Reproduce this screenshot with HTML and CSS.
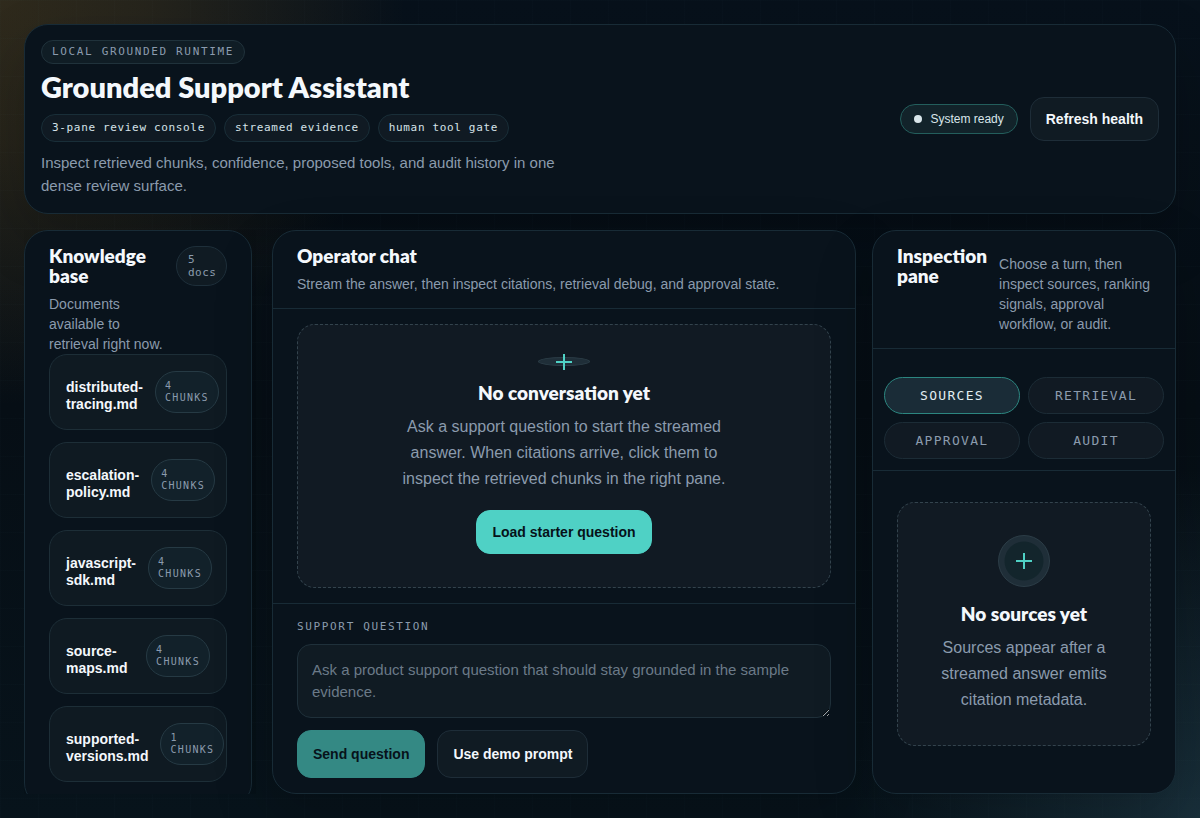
FILE: index.html
```html
<!DOCTYPE html>
<html lang="en">
<head>
  <meta charset="UTF-8">
  <meta name="viewport" content="width=device-width, initial-scale=1.0">
  <title>Grounded Support Assistant</title>
  <link rel="stylesheet" href="styles.css">
</head>
<body>
  <div class="app">

    <header class="hero">
      <div class="hero-copy">
        <span class="eyebrow">Local grounded runtime</span>
        <h1>Grounded Support Assistant</h1>
        <div class="chips">
          <span class="chip">3-pane review console</span>
          <span class="chip">streamed evidence</span>
          <span class="chip">human tool gate</span>
        </div>
        <p class="hero-text">Inspect retrieved chunks, confidence, proposed tools, and audit history in one dense review surface.</p>
      </div>
      <div class="hero-actions">
        <span class="status"><span class="status-dot"></span>System ready</span>
        <button class="btn" type="button">Refresh health</button>
      </div>
    </header>

    <main class="workspace">

      <div class="sidebar">
        <section class="panel docs">
          <div class="docs-head">
            <div>
              <h2>Knowledge base</h2>
              <p class="sub">Documents available to retrieval right now.</p>
            </div>
            <span class="docs-count">5 docs</span>
          </div>
          <ul class="doc-list">
            <li class="doc"><strong class="doc-name">distributed-tracing.md</strong><span class="doc-chunks">4 chunks</span></li>
            <li class="doc"><strong class="doc-name">escalation-policy.md</strong><span class="doc-chunks">4 chunks</span></li>
            <li class="doc"><strong class="doc-name">javascript-sdk.md</strong><span class="doc-chunks">4 chunks</span></li>
            <li class="doc"><strong class="doc-name">source-maps.md</strong><span class="doc-chunks">4 chunks</span></li>
            <li class="doc"><strong class="doc-name">supported-versions.md</strong><span class="doc-chunks">1 chunks</span></li>
          </ul>
        </section>
      </div>

      <section class="panel chat">
        <div class="panel-head">
          <h2>Operator chat</h2>
          <p class="sub">Stream the answer, then inspect citations, retrieval debug, and approval state.</p>
        </div>
        <div class="chat-body">
          <div class="empty">
            <div class="empty-icon flat">
              <svg width="16" height="16" viewBox="0 0 16 16"><path d="M8 0v16M0 8h16" stroke="currentColor" stroke-width="2"/></svg>
            </div>
            <h3>No conversation yet</h3>
            <p>Ask a support question to start the streamed answer. When citations arrive, click them to inspect the retrieved chunks in the right pane.</p>
            <button class="btn btn-primary" type="button">Load starter question</button>
          </div>
        </div>
        <form class="composer">
          <label for="question">Support question</label>
          <textarea id="question" rows="2" placeholder="Ask a product support question that should stay grounded in the sample evidence."></textarea>
          <div class="composer-actions">
            <button class="btn btn-primary" type="submit" disabled>Send question</button>
            <button class="btn" type="button">Use demo prompt</button>
          </div>
        </form>
      </section>

      <section class="panel inspect">
        <div class="panel-head inspect-head">
          <h2>Inspection pane</h2>
          <p class="sub">Choose a turn, then inspect sources, ranking signals, approval workflow, or audit.</p>
        </div>
        <div class="tabs">
          <button class="tab active" type="button">Sources</button>
          <button class="tab" type="button">Retrieval</button>
          <button class="tab" type="button">Approval</button>
          <button class="tab" type="button">Audit</button>
        </div>
        <div class="inspect-body">
          <div class="empty">
            <div class="empty-icon">
              <svg width="16" height="16" viewBox="0 0 16 16"><path d="M8 0v16M0 8h16" stroke="currentColor" stroke-width="2"/></svg>
            </div>
            <h3>No sources yet</h3>
            <p>Sources appear after a streamed answer emits citation metadata.</p>
          </div>
        </div>
      </section>

    </main>
  </div>
</body>
</html>
```

FILE: styles.css
```css
:root {
  --line: #182b36;
  --text: #f4f8fc;
  --muted: #8b9bad;
  --teal: #4fd1c5;
  --sans: "Liberation Sans", Arial, sans-serif;
  --display: Lato, "Liberation Sans", sans-serif;
  --mono: "DejaVu Sans Mono", monospace;
}

* {
  margin: 0;
  padding: 0;
  box-sizing: border-box;
}

body {
  min-height: 100vh;
  font-family: var(--sans);
  color: var(--text);
  background:
    linear-gradient(rgba(148, 190, 210, 0.01) 1px, transparent 1px) 0 0 / 38px 38px,
    linear-gradient(90deg, rgba(148, 190, 210, 0.01) 1px, transparent 1px) 0 0 / 38px 38px,
    radial-gradient(circle at top left, rgba(245, 166, 35, 0.17), rgba(245, 166, 35, 0.13) 10%, transparent 28%),
    radial-gradient(circle at bottom right, rgba(70, 120, 140, 0.28), transparent 24%),
    linear-gradient(180deg, #07111b, #060e15 50%, #07131b);
}

.app {
  height: 100vh;
  min-height: 818px;
  padding: 24px;
  display: flex;
  flex-direction: column;
  gap: 16px;
}

h1, h2, h3 {
  font-family: var(--display);
  font-weight: 800;
}

h1 {
  font-size: 29px;
  line-height: 30px;
}

h2 {
  font-size: 19px;
  line-height: 20px;
}

.sub {
  margin-top: 8px;
  font-size: 14px;
  line-height: 20px;
  color: var(--muted);
}

/* header */
.hero {
  padding: 15px 16px 16px;
  display: flex;
  justify-content: space-between;
  align-items: center;
  background: #09131c;
  border: 1px solid var(--line);
  border-radius: 24px;
  box-shadow: 0 24px 60px rgba(0, 0, 0, 0.2);
}

.hero-copy {
  display: flex;
  flex-direction: column;
  align-items: flex-start;
  gap: 8px;
}

.eyebrow, .chip {
  padding: 0 10px;
  font-family: var(--mono);
  font-size: 11px;
  border: 1px solid #20323b;
  border-radius: 999px;
}

.eyebrow {
  line-height: 22px;
  letter-spacing: 0.15em;
  text-transform: uppercase;
  color: var(--muted);
  background: #101d25;
}

.chips {
  padding-top: 4px;
  display: flex;
  gap: 8px;
}

.chip {
  line-height: 26px;
  letter-spacing: 0.06em;
  color: #d5e2e8;
  background: #101a23;
  border-color: #192e38;
}

.hero-text {
  max-width: 540px;
  padding-top: 1px;
  font-size: 15px;
  line-height: 23px;
  color: var(--muted);
}

.hero-actions {
  display: flex;
  align-items: center;
  gap: 12px;
}

.status {
  display: flex;
  align-items: center;
  gap: 8px;
  padding: 0 13px;
  font-size: 12px;
  line-height: 28px;
  color: #d9e6ea;
  background: #12232a;
  border: 1px solid #235e5c;
  border-radius: 999px;
}

.status-dot {
  width: 8px;
  height: 8px;
  border-radius: 50%;
  background: #d9e6ea;
}

.btn {
  min-height: 44px;
  padding: 0 15px;
  font-family: var(--sans);
  font-size: 14px;
  font-weight: 700;
  color: var(--text);
  background: #101b23;
  border: 1px solid #1e2d38;
  border-radius: 14px;
  cursor: pointer;
}

.btn-primary {
  color: #061219;
  background: var(--teal);
  border-color: var(--teal);
}

.btn:disabled {
  opacity: 0.62;
}

/* three columns */
.workspace {
  flex: 1;
  min-height: 0;
  display: grid;
  grid-template-columns: 232px minmax(0, 1fr) 304px;
  gap: 16px;
}

.panel {
  background: #09131c;
  border: 1px solid var(--line);
  border-radius: 24px;
  box-shadow: 0 24px 60px rgba(0, 0, 0, 0.2);
}

.panel-head {
  padding: 15px 24px 14px;
  border-bottom: 1px solid var(--line);
}

/* documents */
.sidebar {
  min-height: 0;
  padding-right: 4px;
  overflow: hidden;
}

.docs {
  padding: 15px 24px 24px;
}

.docs-head {
  display: flex;
  align-items: flex-start;
  justify-content: space-between;
  gap: 12px;
}

.docs-count {
  flex: none;
  width: 51px;
  padding: 6px 11px;
  font-family: var(--mono);
  font-size: 11px;
  line-height: 13px;
  letter-spacing: 0.04em;
  color: var(--muted);
  background: #101b23;
  border: 1px solid #1e2f3a;
  border-radius: 999px;
}

.doc-list {
  list-style: none;
  display: flex;
  flex-direction: column;
  gap: 12px;
}

.doc {
  padding: 16px;
  display: flex;
  align-items: flex-end;
  gap: 12px;
  background: #0f1a22;
  border: 1px solid #1d2e37;
  border-radius: 18px;
}

.doc-name {
  font-size: 14px;
  line-height: 17px;
}

.doc-chunks {
  padding: 8px 9px;
  font-family: var(--mono);
  font-size: 10px;
  line-height: 12px;
  letter-spacing: 0.13em;
  text-transform: uppercase;
  color: var(--muted);
  background: #12212a;
  border: 1px solid #263a44;
  border-radius: 999px;
}

/* chat */
.chat, .inspect {
  display: flex;
  flex-direction: column;
}

.chat-body {
  flex: 1;
  padding: 15px 24px;
  display: flex;
}

.empty {
  flex: 1;
  padding: 32px;
  display: flex;
  flex-direction: column;
  align-items: center;
  text-align: center;
  background: #111a23;
  border: 1px dashed #33434d;
  border-radius: 18px;
}

.empty-icon {
  width: 52px;
  height: 52px;
  margin-bottom: 16px;
  display: flex;
  align-items: center;
  justify-content: center;
  color: var(--teal);
  background: radial-gradient(circle, #13252c 19px, #1f2e38 20px);
  border: 1px solid #2c3d47;
  border-radius: 50%;
}

.empty-icon.flat {
  height: 9px;
  background: #1f2e38;
}

.empty-icon svg {
  flex: none;
}

.empty h3 {
  font-size: 19px;
  line-height: 22px;
}

.empty p {
  max-width: 340px;
  margin-top: 10px;
  font-size: 16px;
  line-height: 26px;
  color: var(--muted);
}

.empty .btn {
  margin-top: 18px;
}

.composer {
  padding: 15px 24px;
  border-top: 1px solid var(--line);
}

.composer label {
  display: block;
  font-family: var(--mono);
  font-size: 11px;
  line-height: 15px;
  letter-spacing: 0.15em;
  text-transform: uppercase;
  color: var(--muted);
}

.composer textarea {
  display: block;
  width: 100%;
  margin-top: 10px;
  padding: 14px;
  font-family: var(--sans);
  font-size: 15px;
  line-height: 22px;
  color: var(--text);
  background: #101b23;
  border: 1px solid #1f303a;
  border-radius: 14px;
  resize: vertical;
}

.composer textarea::placeholder {
  color: #6b7a88;
}

.composer-actions {
  margin-top: 12px;
  display: flex;
  gap: 12px;
}

.composer-actions .btn {
  min-height: 48px;
}

/* inspection */
.inspect-head {
  display: flex;
  gap: 12px;
}

.tabs {
  padding: 28px 11px 11px;
  display: grid;
  grid-template-columns: 1fr 1fr;
  gap: 8px;
  border-bottom: 1px solid var(--line);
}

.tab {
  height: 37px;
  font-family: var(--mono);
  font-size: 13px;
  letter-spacing: 0.1em;
  text-transform: uppercase;
  color: var(--muted);
  background: #111a23;
  border: 1px solid #1c2c36;
  border-radius: 999px;
  cursor: pointer;
}

.tab.active {
  color: #e2eef2;
  background: #1a2c37;
  border-color: #2c8680;
}

.inspect-body {
  padding: 31px 24px;
  display: flex;
}
```
